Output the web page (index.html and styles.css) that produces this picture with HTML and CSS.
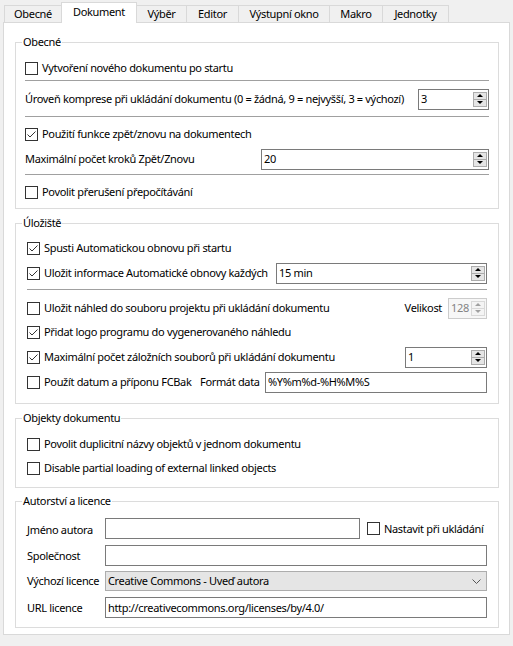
FILE: index.html
```html
<!DOCTYPE html>
<html lang="cs">
<head>
<meta charset="utf-8">
<title>Dokument</title>
<link rel="stylesheet" href="styles.css">
</head>
<body>
<div class="tabs">
  <div class="tab t-obecne">Obecné</div>
  <div class="tab tab-active t-dokument">Dokument</div>
  <div class="tab t-vyber">Výběr</div>
  <div class="tab t-editor">Editor</div>
  <div class="tab t-vystup">Výstupní okno</div>
  <div class="tab t-makro">Makro</div>
  <div class="tab t-jednotky">Jednotky</div>
</div>
<div class="pane">

  <fieldset class="group g1">
    <legend>Obecné</legend>
    <div class="body body-g1">
      <div class="row"><span class="cb"></span><span>Vytvoření nového dokumentu po startu</span></div>
      <div class="sep"></div>
      <div class="row mt6"><span class="grow">Úroveň komprese při ukládání dokumentu (0 = žádná, 9 = nejvyšší, 3 = výchozí)</span>
        <div class="spin w-komprese"><span class="val">3</span><span class="btns"><span class="btn"><i class="up"></i></span><span class="btn"><i class="down"></i></span></span></div>
      </div>
      <div class="sep mt5"></div>
      <div class="row mt5"><span class="cb on"><svg viewBox="0 0 11 11" width="11" height="11"><polyline points="1.5,5.5 4,8 9.5,2.5" fill="none" stroke="#333" stroke-width="1"/></svg></span><span>Použití funkce zpět/znovu na dokumentech</span></div>
      <div class="row mt1"><span class="grow">Maximální počet kroků Zpět/Znovu</span>
        <div class="spin w-kroky"><span class="val">20</span><span class="btns"><span class="btn"><i class="up"></i></span><span class="btn"><i class="down"></i></span></span></div>
      </div>
      <div class="sep mt3"></div>
      <div class="row mt5"><span class="cb"></span><span>Povolit přerušení přepočítávání</span></div>
    </div>
  </fieldset>

  <fieldset class="group g2">
    <legend>Úložiště</legend>
    <div class="body body-g2">
      <div class="row"><span class="cb on"><svg viewBox="0 0 11 11" width="11" height="11"><polyline points="1.5,5.5 4,8 9.5,2.5" fill="none" stroke="#333" stroke-width="1"/></svg></span><span>Spusti Automatickou obnovu při startu</span></div>
      <div class="row mt1"><span class="cb on"><svg viewBox="0 0 11 11" width="11" height="11"><polyline points="1.5,5.5 4,8 9.5,2.5" fill="none" stroke="#333" stroke-width="1"/></svg></span><span class="grow">Uložit informace Automatické obnovy každých</span>
        <div class="spin w-interval"><span class="val">15 min</span><span class="btns"><span class="btn"><i class="up"></i></span><span class="btn"><i class="down"></i></span></span></div>
      </div>
      <div class="sep mt4"></div>
      <div class="row mt6"><span class="cb"></span><span class="grow">Uložit náhled do souboru projektu při ukládání dokumentu</span>
        <span class="side-label">Velikost</span>
        <div class="spin disabled w-velikost"><span class="val">128</span><span class="btns"><span class="btn"><i class="up"></i></span><span class="btn"><i class="down"></i></span></span></div>
      </div>
      <div class="row"><span class="cb on"><svg viewBox="0 0 11 11" width="11" height="11"><polyline points="1.5,5.5 4,8 9.5,2.5" fill="none" stroke="#333" stroke-width="1"/></svg></span><span>Přidat logo programu do vygenerovaného náhledu</span></div>
      <div class="row mt1"><span class="cb on"><svg viewBox="0 0 11 11" width="11" height="11"><polyline points="1.5,5.5 4,8 9.5,2.5" fill="none" stroke="#333" stroke-width="1"/></svg></span><span class="grow">Maximální počet záložních souborů při ukládání dokumentu</span>
        <div class="spin w-zalohy"><span class="val">1</span><span class="btns"><span class="btn"><i class="up"></i></span><span class="btn"><i class="down"></i></span></span></div>
      </div>
      <div class="row mt1"><span class="cb"></span><span class="fcbak">Použít datum a příponu FCBak</span>
        <span class="format-label">Formát data</span>
        <div class="field w-format"><span class="val">%Y%m%d-%H%M%S</span></div>
      </div>
    </div>
  </fieldset>

  <fieldset class="group g3">
    <legend>Objekty dokumentu</legend>
    <div class="body body-g3">
      <div class="row"><span class="cb"></span><span>Povolit duplicitní názvy objektů v jednom dokumentu</span></div>
      <div class="row"><span class="cb"></span><span>Disable partial loading of external linked objects</span></div>
    </div>
  </fieldset>

  <fieldset class="group g4">
    <legend>Autorství a licence</legend>
    <div class="body body-g4">
      <div class="frow"><span class="flabel lower">Jméno autora</span>
        <div class="field w-jmeno"></div>
        <span class="cb ml7"></span><span>Nastavit při ukládání</span>
      </div>
      <div class="frow mt6"><span class="flabel">Společnost</span><div class="field grow"></div></div>
      <div class="frow combo-row mt5"><span class="flabel">Výchozí licence</span>
        <div class="combo grow"><span class="val">Creative Commons - Uveď autora</span>
          <svg class="chev" viewBox="0 0 9 5" width="9" height="5"><polyline points="0.5,0.5 4.5,4.5 8.5,0.5" fill="none" stroke="#555" stroke-width="1"/></svg>
        </div>
      </div>
      <div class="frow mt6"><span class="flabel">URL licence</span><div class="field grow"><span class="val">http://creativecommons.org/licenses/by/4.0/</span></div></div>
    </div>
  </fieldset>

</div>
</body>
</html>
```

FILE: styles.css
```css
* { box-sizing: border-box; }
html, body { margin: 0; padding: 0; }
body {
  width: 513px;
  height: 646px;
  overflow: hidden;
  background: #f0f0f0;
  color: #000;
  font-family: "Noto Sans", "Open Sans", sans-serif;
  font-size: 11px;
  letter-spacing: -0.33px;
  line-height: 16px;
}

/* tabs */
.tabs {
  display: flex;
  align-items: flex-end;
  height: 22px;
  padding-left: 4px;
}
.tab {
  height: 17px;
  border: 1px solid #d9d9d9;
  border-bottom: none;
  margin-right: -1px;
  background: #f0f0f0;
  display: flex;
  align-items: center;
  justify-content: center;
  white-space: nowrap;
}
.tab-active {
  height: 21px;
  margin-bottom: -1px;
  padding-bottom: 2px;
  background: #fff;
  position: relative;
  z-index: 1;
}
.t-obecne { width: 58px; }
.t-dokument { width: 76px; }
.t-vyber { width: 51px; }
.t-editor { width: 53px; }
.t-vystup { width: 92px; }
.t-makro { width: 54px; }
.t-jednotky { width: 67px; }

/* pane */
.pane {
  margin-left: 3px;
  width: 507px;
  height: 613px;
  border: 1px solid #d9d9d9;
  background: #fff;
  display: flex;
  flex-direction: column;
}

/* group boxes */
.group {
  margin: 0 10px 0 11px;
  padding: 0;
  min-width: 0;
  border: 1px solid #dcdcdc;
}
.group legend {
  margin-left: 6px;
  padding: 0 1px;
  height: 16px;
  line-height: 16px;
}
.g1 { margin-top: 11px; }
.g2 { margin-top: 6px; }
.g3 { margin-top: 6px; }
.g4 { margin-top: 5px; }

.body { display: flex; flex-direction: column; }
.body-g1 { padding: 6px 9px 4px 9px; }
.body-g2 { padding: 5px 11px 9px 11px; }
.body-g3 { padding: 6px 11px 7px 11px; }
.body-g4 { padding: 9px 11px 9px 11px; }

.row {
  height: 24px;
  display: flex;
  align-items: center;
  white-space: nowrap;
}
.grow { flex: 1 1 auto; min-width: 0; }
.sep { height: 1px; background: #a0a0a0; }

.mt1 { margin-top: 1px; }
.mt3 { margin-top: 3px; }
.mt4 { margin-top: 4px; }
.mt5 { margin-top: 5px; }
.mt6 { margin-top: 6px; }
.ml7 { margin-left: 7px; }

/* checkbox */
.cb {
  flex: none;
  width: 13px;
  height: 13px;
  border: 1px solid #333;
  background: #fff;
  margin-right: 4px;
  display: flex;
}
.cb svg { display: block; }

/* spin boxes and fields */
.spin, .field {
  flex: none;
  height: 21px;
  border: 1px solid #7a7a7a;
  background: #fff;
  display: flex;
  align-items: center;
  white-space: nowrap;
  overflow: hidden;
}
.field.grow { flex: 1 1 auto; }
.val { flex: 1 1 auto; padding-left: 2px; }
.btns {
  flex: none;
  width: 14px;
  align-self: stretch;
  margin: 2px 1px 2px 0;
  display: flex;
  flex-direction: column;
}
.btn {
  flex: 1 1 0;
  border: 1px solid #acacac;
  background: #e5e5e5;
  display: flex;
  align-items: center;
  justify-content: center;
}
.btn + .btn { margin-top: -1px; }
.btn i {
  display: block;
  width: 0;
  height: 0;
  border-left: 3px solid transparent;
  border-right: 3px solid transparent;
}
.btn i.up { border-bottom: 3px solid #000; }
.btn i.down { border-top: 3px solid #000; }

.spin.disabled { border-color: #cccccc; background: #f7f7f7; color: #838383; }
.spin.disabled .btn { border-color: #d9d9d9; background: #f4f4f4; }
.spin.disabled .btn i.up { border-bottom-color: #a0a0a0; }
.spin.disabled .btn i.down { border-top-color: #a0a0a0; }

.w-komprese { width: 71px; }
.w-kroky { width: 228px; }
.w-interval { width: 211px; }
.w-velikost { width: 39px; }
.w-zalohy { width: 82px; }
.w-format { width: 222px; }
.w-jmeno { width: 255px; }

.side-label { margin-right: 6px; }
.fcbak { width: 156px; }
.format-label { flex: 1 1 auto; }

/* form rows */
.frow {
  height: 21px;
  display: flex;
  align-items: center;
  white-space: nowrap;
}
.combo-row { height: 20px; }
.flabel { flex: none; width: 78px; }
.flabel.lower { padding-top: 3px; }

.combo {
  height: 20px;
  border: 1px solid #adadad;
  background: #e5e5e5;
  display: flex;
  align-items: center;
}
.chev { flex: none; margin-right: 5px; display: block; }
```
